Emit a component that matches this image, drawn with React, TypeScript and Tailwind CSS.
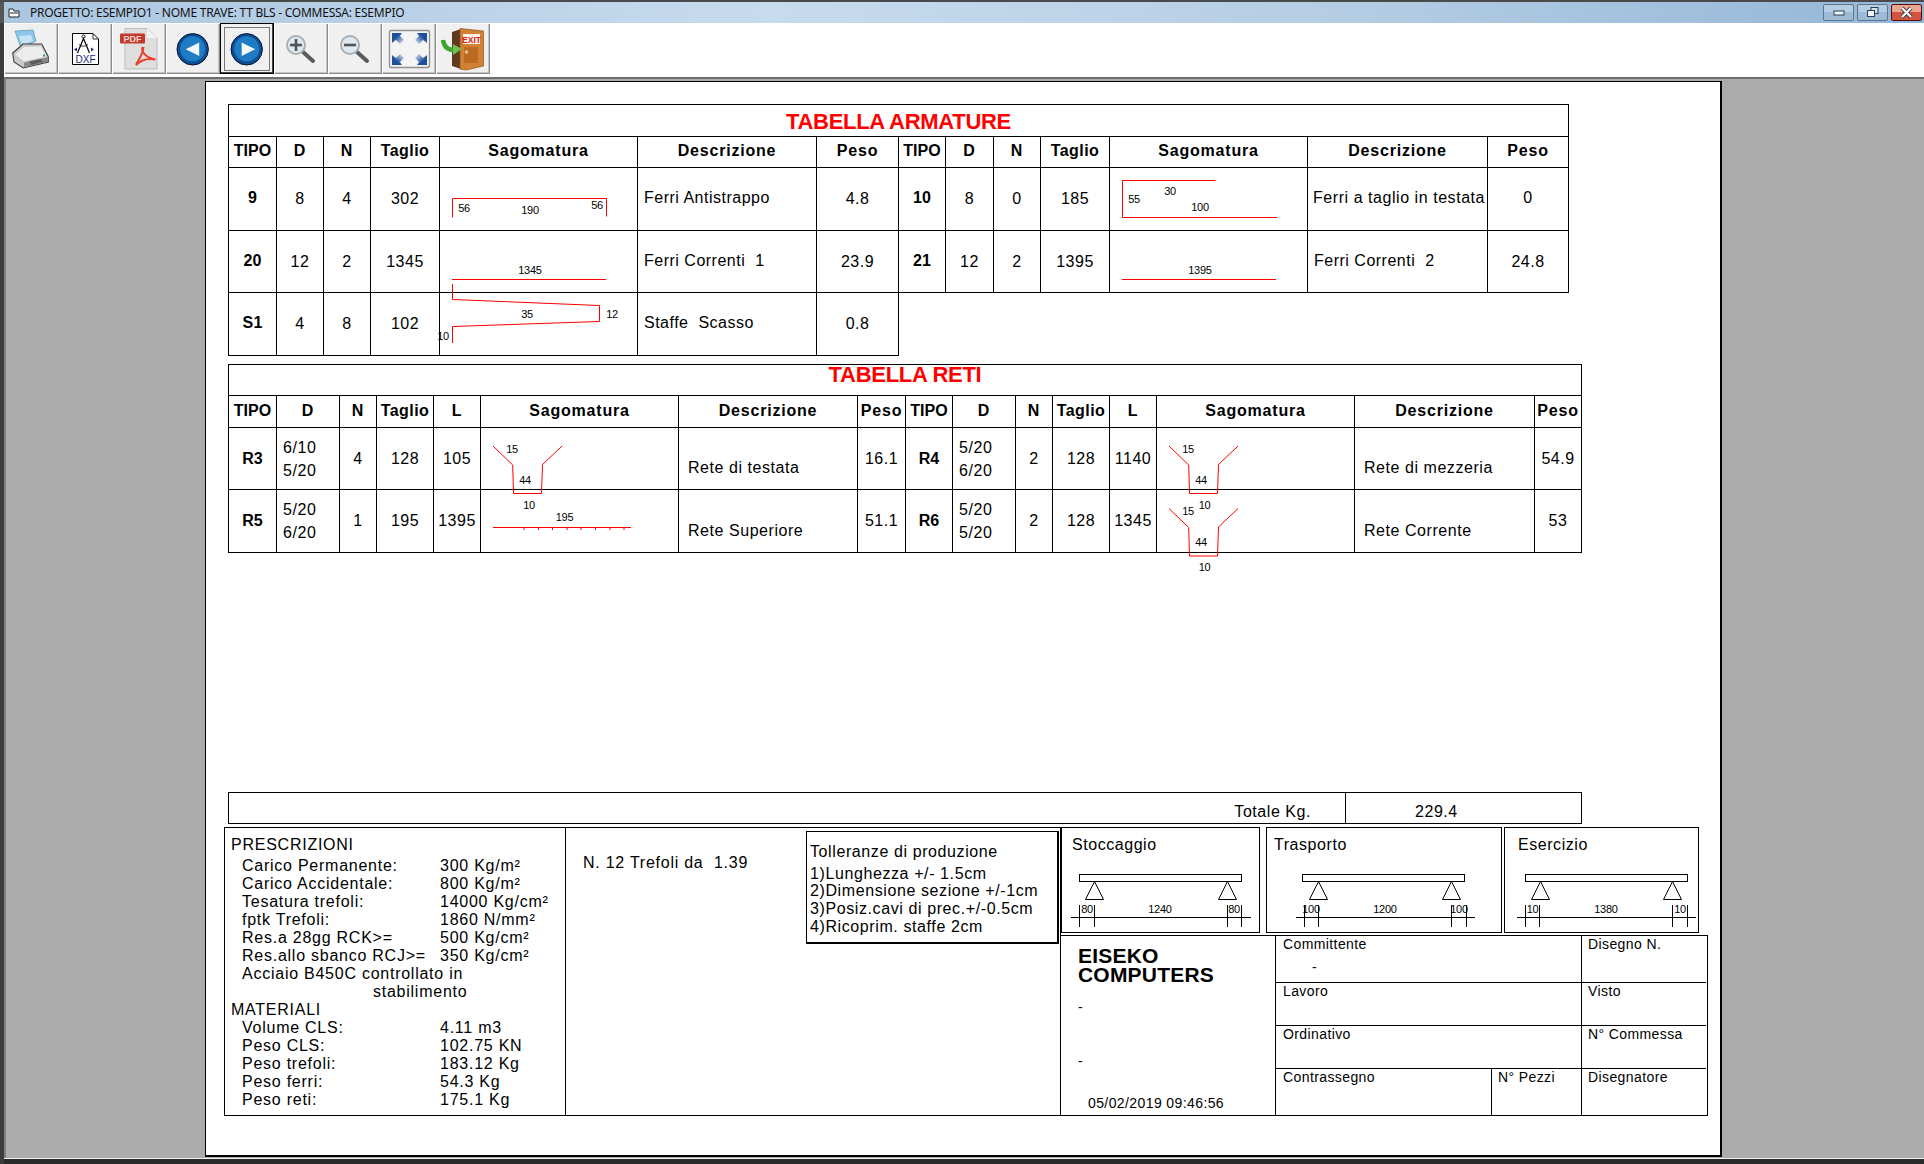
import React from "react";

const Base = "flex items-center justify-center border-r border-b border-black whitespace-pre";

function H({ c, first, narrow, mid }: { c: string; first?: boolean; narrow?: boolean; mid?: boolean }) {
  return (
    <div className={`${Base} ${first ? "border-l" : ""} ${narrow ? "tracking-[0px]" : mid ? "tracking-[0.45px]" : "tracking-[0.8px]"} font-bold text-[16px] pb-[2px]`}>{c}</div>
  );
}
function V({ c, first, bold, up }: { c: string; first?: boolean; bold?: boolean; up?: boolean }) {
  return (
    <div className={`${Base} ${first ? "border-l" : ""} text-[16px] ${bold ? "font-bold tracking-[0.1px]" : "tracking-[0.5px]"} ${up ? "pb-[2px]" : ""}`}>{c}</div>
  );
}
function Sk({ x, y, w, h, children }: { x: number; y: number; w: number; h: number; children?: React.ReactNode }) {
  return (
    <div className="flex items-start justify-start border-r border-b border-black">
      <svg width={w} height={h} viewBox={`${x} ${y} ${w} ${h}`} className="block overflow-visible" fill="none" stroke="#ff0000" strokeWidth="1">
        {children}
      </svg>
    </div>
  );
}
function T({ x, y, c }: { x: number; y: number; c: string }) {
  return (
    <text x={x} y={y + 4} textAnchor="middle" fontSize="11" letterSpacing="-0.25" fill="#000" stroke="none" fontFamily="Liberation Sans">{c}</text>
  );
}
function Desc({ c }: { c: string }) {
  return <div className={`${Base} justify-start! pl-[6px] pb-[2px] text-[16px] tracking-[0.5px]`}>{c}</div>;
}
function Desc2({ c, pt }: { c: string; pt?: boolean }) {
  return <div className={`${Base} justify-start! pl-[9px] ${pt ? "pt-[20px]" : "pt-[19px]"} text-[16px] tracking-[0.55px]`}>{c}</div>;
}
function DD({ a, b }: { a: string; b: string }) {
  return (
    <div className="flex flex-col justify-center pl-[6px] border-r border-b border-black text-[16px] tracking-[0.6px] leading-[23px]">
      <div>{a}</div>
      <div>{b}</div>
    </div>
  );
}

function Armature() {
  return (
    <div className="ml-[22px] mt-[22px] grid w-[1341px] grid-cols-[49px_47px_47px_69px_198px_179px_82px_47px_48px_47px_69px_198px_180px_81px] grid-rows-[33px_31px_63px_62px_63px]">
      <div className="col-span-14 flex items-center justify-center border border-black text-[22px] font-bold tracking-[-0.3px] text-[#ff0000] pt-[2px]">TABELLA ARMATURE</div>
      <H c="TIPO" first narrow /><H c="D" /><H c="N" /><H c="Taglio" mid /><H c="Sagomatura" /><H c="Descrizione" /><H c="Peso" />
      <H c="TIPO" narrow /><H c="D" /><H c="N" /><H c="Taglio" mid /><H c="Sagomatura" /><H c="Descrizione" /><H c="Peso" />

      <V c="9" first bold up /><V c="8" /><V c="4" /><V c="302" />
      <Sk x={440} y={168} w={197} h={62}>
        <polyline points="452.5,217.5 452.5,198.5 606.5,198.5 606.5,216.5" />
        <T x={464} y={208} c="56" /><T x={530} y={210} c="190" /><T x={597} y={205} c="56" />
      </Sk>
      <Desc c="Ferri Antistrappo" /><V c="4.8" />
      <V c="10" bold up /><V c="8" /><V c="0" /><V c="185" />
      <Sk x={1110} y={168} w={197} h={62}>
        <polyline points="1215.5,180.5 1122.5,180.5 1122.5,217.5 1277,217.5" />
        <T x={1134} y={199} c="55" /><T x={1170} y={191} c="30" /><T x={1200} y={207} c="100" />
      </Sk>
      <div className={`${Base} justify-start! pl-[5px] pb-[2px] text-[16px] tracking-[0.55px]`}>Ferri a taglio in testata</div><V c="0" up />

      <V c="20" first bold up /><V c="12" /><V c="2" /><V c="1345" />
      <Sk x={440} y={231} w={197} h={61}>
        <line x1="452" y1="279.5" x2="606" y2="279.5" />
        <T x={530} y={270} c="1345" />
      </Sk>
      <Desc c="Ferri Correnti  1" /><V c="23.9" />
      <V c="21" bold up /><V c="12" /><V c="2" /><V c="1395" />
      <Sk x={1110} y={231} w={197} h={61}>
        <line x1="1122" y1="279.5" x2="1276" y2="279.5" />
        <T x={1200} y={270} c="1395" />
      </Sk>
      <Desc c="Ferri Correnti  2" /><V c="24.8" />

      <V c="S1" first bold up /><V c="4" /><V c="8" /><V c="102" />
      <Sk x={440} y={293} w={197} h={62}>
        <polyline points="452.5,284 452.5,299.5 599.5,305.5 599.5,321.5 452.5,326.5 452.5,343" />
        <T x={527} y={314} c="35" /><T x={612} y={314} c="12" /><T x={443} y={336} c="10" />
      </Sk>
      <Desc c="Staffe  Scasso" /><V c="0.8" />
    </div>
  );
}

function Bars({ dx, dy }: { dx: number; dy: number }) {
  return (
    <polyline
      strokeWidth="1"
      points={`${493 + dx},${446 + dy} ${512.7 + dx},${465 + dy} ${513.5 + dx},${493.5 + dy} ${541.5 + dx},${493.5 + dy} ${542.5 + dx},${464.5 + dy} ${562 + dx},${446 + dy}`}
    />
  );
}

function Reti() {
  const ticks = [524, 538.5, 552.5, 567, 581, 595.5, 610, 624];
  return (
    <div className="ml-[22px] mt-[8px] grid w-[1354px] grid-cols-[49px_63px_37px_57px_47px_198px_179px_48px_47px_63px_37px_57px_47px_198px_180px_47px] grid-rows-[32px_32px_62px_63px]">
      <div className="col-span-16 flex items-center justify-center border border-black text-[22px] font-bold tracking-[-0.3px] text-[#ff0000] pb-[12px]">TABELLA RETI</div>
      <H c="TIPO" first narrow /><H c="D" /><H c="N" /><H c="Taglio" mid /><H c="L" /><H c="Sagomatura" /><H c="Descrizione" /><H c="Peso" />
      <H c="TIPO" narrow /><H c="D" /><H c="N" /><H c="Taglio" mid /><H c="L" /><H c="Sagomatura" /><H c="Descrizione" /><H c="Peso" />

      <V c="R3" first bold /><DD a="6/10" b="5/20" /><V c="4" /><V c="128" /><V c="105" />
      <Sk x={481} y={428} w={197} h={61}>
        <Bars dx={0} dy={0} />
        <T x={512} y={449} c="15" /><T x={525} y={480} c="44" />
      </Sk>
      <Desc2 c="Rete di testata" /><V c="16.1" />
      <V c="R4" bold /><DD a="5/20" b="6/20" /><V c="2" /><V c="128" /><V c="1140" />
      <Sk x={1157} y={428} w={197} h={61}>
        <Bars dx={676} dy={0} />
        <T x={1188} y={449} c="15" /><T x={1201} y={480} c="44" />
      </Sk>
      <Desc2 c="Rete di mezzeria" /><V c="54.9" />

      <V c="R5" first bold /><DD a="5/20" b="6/20" /><V c="1" /><V c="195" /><V c="1395" />
      <Sk x={481} y={490} w={197} h={62}>
        <line x1="493" y1="527.5" x2="631" y2="527.5" />
        {ticks.map((t) => (
          <line key={t} x1={t} y1="527.5" x2={t} y2="530" />
        ))}
        <T x={529} y={505} c="10" /><T x={564.5} y={517} c="195" />
      </Sk>
      <Desc2 c="Rete Superiore" pt /><V c="51.1" />
      <V c="R6" bold /><DD a="5/20" b="5/20" /><V c="2" /><V c="128" /><V c="1345" />
      <Sk x={1157} y={490} w={197} h={62}>
        <Bars dx={676} dy={62.5} />
        <T x={1188} y={511} c="15" /><T x={1204.5} y={505} c="10" /><T x={1201} y={542} c="44" /><T x={1204.5} y={567} c="10" />
      </Sk>
      <Desc2 c="Rete Corrente" pt /><V c="53" />
    </div>
  );
}

function Line({ a, b }: { a: string; b: string }) {
  return (
    <div className="flex h-[18px] items-center pl-[17px] whitespace-pre">
      <span className="w-[198px]">{a}</span>
      <span>{b}</span>
    </div>
  );
}

function Beam({ vx, vw, r1, r2, a1, a2, l1, l2, t, tx, lbl }: { vx: number; vw: number; r1: number; r2: number; a1: number; a2: number; l1: number; l2: number; t: number[]; tx: number[]; lbl: string[] }) {
  return (
    <svg width={vw} height="70" viewBox={`${vx} 861 ${vw} 70`} className="block" fill="none" stroke="#000" strokeWidth="1">
      <rect x={r1 + 0.5} y="874.5" width={r2 - r1} height="7" />
      {[a1, a2].map((a) => (
        <polygon key={a} points={`${a + 0.5},881.5 ${a - 8.5},899.5 ${a + 9.5},899.5`} />
      ))}
      <line x1={l1} y1="917.5" x2={l2} y2="917.5" />
      {t.map((x) => (
        <line key={x} x1={x + 0.5} y1="905" x2={x + 0.5} y2="927" />
      ))}
      {lbl.map((s, i) => (
        <text key={i} x={tx[i]} y="913" textAnchor="middle" fontSize="11" letterSpacing="-0.25" fill="#000" stroke="none" fontFamily="Liberation Sans">{s}</text>
      ))}
    </svg>
  );
}

function Bottom() {
  return (
    <div className="ml-[18px] mt-[3px] flex">
      <div className="flex h-[289px] w-[837px] border border-black text-[16px] tracking-[0.75px]">
        <div className="w-[341px] border-r border-black pt-[8px]">
          <div className="h-[18px] flex items-center pl-[6px]">PRESCRIZIONI</div>
          <div className="mt-[3px]">
            <Line a="Carico Permanente:" b="300 Kg/m²" />
            <Line a="Carico Accidentale:" b="800 Kg/m²" />
            <Line a="Tesatura trefoli:" b="14000 Kg/cm²" />
            <Line a="fptk Trefoli:" b="1860 N/mm²" />
            <Line a="Res.a 28gg RCK>=" b="500 Kg/cm²" />
            <Line a="Res.allo sbanco RCJ>=" b="350 Kg/cm²" />
            <div className="h-[18px] flex items-center pl-[17px]">Acciaio B450C controllato in</div>
            <div className="h-[18px] flex items-center pl-[148px]">stabilimento</div>
          </div>
          <div className="h-[18px] flex items-center pl-[6px]">MATERIALI</div>
          <Line a="Volume CLS:" b="4.11 m3" />
          <Line a="Peso CLS:" b="102.75 KN" />
          <Line a="Peso trefoli:" b="183.12 Kg" />
          <Line a="Peso ferri:" b="54.3 Kg" />
          <Line a="Peso reti:" b="175.1 Kg" />
        </div>
        <div className="flex flex-1 items-start justify-between pr-[1px]">
          <div className="ml-[17px] mt-[26px] h-[18px] flex items-center whitespace-pre">N. 12 Trefoli da  1.39</div>
          <div className="mt-[3px] h-[113px] w-[253px] border border-r-2 border-b-2 border-black pl-[3px] pt-[11px] tracking-[0.6px]">
            <div className="h-[18px] flex items-center">Tolleranze di produzione</div>
            <div className="mt-[4px]">
              <div className="h-[17px] flex items-center whitespace-pre">1)Lunghezza +/- 1.5cm</div>
              <div className="h-[18px] flex items-center">2)Dimensione sezione +/-1cm</div>
              <div className="h-[18px] flex items-center">3)Posiz.cavi di prec.+/-0.5cm</div>
              <div className="h-[17px] flex items-center">4)Ricoprim. staffe 2cm</div>
            </div>
          </div>
        </div>
      </div>

      <div className="flex flex-col">
        <div className="flex h-[106px] text-[16px] tracking-[0.55px]">
          <div className="w-[199px] border border-black">
            <div className="h-[33px] flex items-center pl-[10px]">Stoccaggio</div>
            <Beam vx={1062} vw={197} r1={1079} r2={1241} a1={1094} a2={1227} l1={1071} l2={1251} t={[1079, 1094, 1227, 1241]} tx={[1087, 1160, 1234]} lbl={["80", "1240", "80"]} />
          </div>
          <div className="ml-[6px] w-[236px] border border-black">
            <div className="h-[33px] flex items-center pl-[7px]">Trasporto</div>
            <Beam vx={1267} vw={234} r1={1302} r2={1464} a1={1318} a2={1451} l1={1296} l2={1475} t={[1304, 1318, 1451, 1466]} tx={[1311, 1385, 1459]} lbl={["100", "1200", "100"]} />
          </div>
          <div className="ml-[2px] w-[195px] border border-black">
            <div className="h-[33px] flex items-center pl-[13px]">Esercizio</div>
            <Beam vx={1505} vw={193} r1={1525} r2={1687} a1={1540} a2={1672} l1={1517} l2={1696} t={[1525, 1539, 1672, 1687]} tx={[1532.5, 1606, 1680]} lbl={["10", "1380", "10"]} />
          </div>
        </div>
        <div className="mt-[2px] flex h-[181px] w-[647px] border-t border-b border-r border-black text-[14px] leading-[16px] tracking-[0.4px]">
          <div className="w-[215px] border-r border-black pl-[17px] pt-[10px]">
            <div className="text-[21px] font-bold leading-[19px] tracking-[0.2px]">EISEKO</div>
            <div className="text-[21px] font-bold leading-[19px] tracking-[0.2px]">COMPUTERS</div>
            <div className="mt-[15px]">-</div>
            <div className="mt-[38px]">-</div>
            <div className="mt-[26px] pl-[10px] whitespace-pre">05/02/2019 09:46:56</div>
          </div>
          <div className="grid flex-1 grid-cols-[216px_90px_124px] grid-rows-[47px_43px_43px_46px]">
            <div className="col-span-2 border-r border-b border-black pl-[7px]">
              <div>Committente</div>
              <div className="mt-[7px] pl-[29px]">-</div>
            </div>
            <div className="border-b border-black pl-[6px]">Disegno N.</div>
            <div className="col-span-2 border-r border-b border-black pl-[7px]">Lavoro</div>
            <div className="border-b border-black pl-[6px]">Visto</div>
            <div className="col-span-2 border-r border-b border-black pl-[7px]">Ordinativo</div>
            <div className="border-b border-black pl-[6px]">N° Commessa</div>
            <div className="border-r border-black pl-[7px]">Contrassegno</div>
            <div className="border-r border-black pl-[6px]">N° Pezzi</div>
            <div className="pl-[6px]">Disegnatore</div>
          </div>
        </div>
      </div>
    </div>
  );
}

function Tool({ x, focus, children }: { x: number; focus?: boolean; children: React.ReactNode }) {
  return (
    <div className={`h-[51px] w-[54px] bg-[#f0f0f0] ${focus ? "shadow-[inset_0_0_0_1px_#000,inset_-1px_-1px_0_1px_#444]" : "shadow-[inset_1px_1px_0_#ffffff,inset_-1px_-1px_0_#8c8c8c,inset_-2px_-2px_0_#c4c4c4]"}`}>
      <svg width="54" height="51" viewBox={`${x} 23 54 51`} className="block">{children}</svg>
    </div>
  );
}

function Round({ cx, back }: { cx: number; back?: boolean }) {
  return (
    <>
      <circle cx={cx} cy="49.3" r="15.7" fill="#0d4f96" stroke="#06122a" strokeWidth="1" />
      <circle cx={cx} cy="48.8" r="12.5" fill="#1f7cc4" />
      <polygon points={back ? `${cx - 7},49.3 ${cx + 6.5},42.5 ${cx + 6.5},56` : `${cx - 5},42.5 ${cx - 5},56 ${cx + 8.5},49.3`} fill="#f4f8fb" />
    </>
  );
}

function Lens({ cx, minus }: { cx: number; minus?: boolean }) {
  return (
    <>
      <line x1={cx + 7} y1="52" x2={cx + 17} y2="61" stroke="#5a5a5a" strokeWidth="4" strokeLinecap="round" />
      <circle cx={cx} cy="45" r="9" fill="#dfe9ef" stroke="#a8b0b4" strokeWidth="2" />
      <rect x={cx - 6} y="43.7" width="12" height="2.6" fill="#555" />
      {!minus && <rect x={cx - 1.3} y="39" width="2.6" height="12" fill="#555" />}
    </>
  );
}

function Toolbar() {
  return (
    <div className="flex h-[54px] bg-white">
      <Tool x={4}>
        <polygon points="15,31 33,30 36,41 21,48" fill="#8cc6e8" stroke="#5f9cc0" strokeWidth="0.8" />
        <polygon points="19,36 31,35 33,41 22,45" fill="#c4e4f5" />
        <polygon points="12.7,53 23,44 41.7,44 48.3,56.7 48.3,62 23.3,68 14,62" fill="#c9c9c9" stroke="#3e3e3e" strokeWidth="1.1" />
        <polygon points="15,54.5 24,47 41,46.5 46.5,56.5 24,61.5" fill="#ececec" />
        <polygon points="24,62.5 48,57 48,61.5 24,67.5" fill="#8a8a8a" />
        <rect x="43" y="54.5" width="2" height="2" fill="#3aa048" />
        <polygon points="29,61.5 41,59 43,62 31,65" fill="#5f5f5f" />
      </Tool>
      <Tool x={58}>
        <polygon points="72.5,33.5 93,33.5 98.5,39 98.5,64.5 72.5,64.5" fill="#fff" stroke="#000" strokeWidth="1" />
        <polyline points="93,33.5 93,39 98.5,39" fill="none" stroke="#000" strokeWidth="0.8" />
        <circle cx="83.5" cy="36.5" r="1.6" fill="none" stroke="#000" strokeWidth="0.9" />
        <polyline points="77.5,53 83.5,38.5 89.5,53" fill="none" stroke="#000" strokeWidth="1.2" />
        <path d="M79 44.5 Q83.5 48 88 44.5" fill="none" stroke="#000" strokeWidth="0.8" />
        <polygon points="74,49.5 77,47.5 77,51.5" fill="#1a2a80" />
        <polygon points="94,49.5 91,47.5 91,51.5" fill="#1a2a80" />
        <text x="85.5" y="63" textAnchor="middle" fontSize="10" fill="#1a2a80" fontFamily="Liberation Sans">DXF</text>
      </Tool>
      <Tool x={112}>
        <polygon points="125,28.5 147,28.5 157,38 157,69 125,69" fill="#dedede" stroke="#bdbdbd" strokeWidth="1" />
        <polygon points="147,28.5 147,38 157,38" fill="#f2f2f2" />
        <rect x="120" y="33.5" width="25" height="10" rx="1" fill="#c33a2a" />
        <text x="132.5" y="42" textAnchor="middle" fontSize="9" fontWeight="bold" fill="#f4d6cf" fontFamily="Liberation Sans">PDF</text>
        <path d="M142.5 47 C141 52 146 58 155.5 59.5 C148 58 141 60 136 65 C139 59 143 54 143.5 47" fill="none" stroke="#e8402a" strokeWidth="2" />
      </Tool>
      <Tool x={166}>
        <Round cx={192.7} back />
      </Tool>
      <Tool x={220} focus>
        <rect x="224.5" y="27.5" width="45" height="43" fill="none" stroke="#000" strokeWidth="1" strokeDasharray="1 1" />
        <Round cx={246.7} />
      </Tool>
      <Tool x={274}>
        <Lens cx={296} />
      </Tool>
      <Tool x={328}>
        <Lens cx={350} minus />
      </Tool>
      <Tool x={382}>
        <defs>
          <linearGradient id="a1" x1="0" y1="0" x2="1" y2="1">
            <stop offset="0.35" stopColor="#1d4f9e" />
            <stop offset="1" stopColor="#1d4f9e" stopOpacity="0" />
          </linearGradient>
          <linearGradient id="a2" x1="1" y1="0" x2="0" y2="1">
            <stop offset="0.35" stopColor="#1d4f9e" />
            <stop offset="1" stopColor="#1d4f9e" stopOpacity="0" />
          </linearGradient>
          <linearGradient id="a3" x1="0" y1="1" x2="1" y2="0">
            <stop offset="0.35" stopColor="#1d4f9e" />
            <stop offset="1" stopColor="#1d4f9e" stopOpacity="0" />
          </linearGradient>
          <linearGradient id="a4" x1="1" y1="1" x2="0" y2="0">
            <stop offset="0.35" stopColor="#1d4f9e" />
            <stop offset="1" stopColor="#1d4f9e" stopOpacity="0" />
          </linearGradient>
        </defs>
        <rect x="389.5" y="30.5" width="40" height="37" rx="2" fill="#f4f4f4" stroke="#8f8f8f" strokeWidth="1.3" />
        <polygon points="392,33 402,33 400,36 404,40 400,44 396,40 392,43" fill="url(#a1)" />
        <polygon points="427,33 417,33 419,36 415,40 419,44 423,40 427,43" fill="url(#a2)" />
        <polygon points="392,65 402,65 400,62 404,58 400,54 396,58 392,55" fill="url(#a3)" />
        <polygon points="427,65 417,65 419,62 415,58 419,54 423,58 427,55" fill="url(#a4)" />
      </Tool>
      <Tool x={436}>
        <polygon points="452,32 461,29 461,69 452,66" fill="#5f3a1e" />
        <polygon points="460,28.5 483.5,31 483.5,66 466,70 460,69" fill="#d08232" stroke="#8e4f16" strokeWidth="0.7" />
        <rect x="463" y="34" width="17" height="10" fill="#fbf3ea" />
        <text x="471.5" y="42.5" textAnchor="middle" fontSize="8.5" fontWeight="bold" fill="#e01818" fontFamily="Liberation Sans">EXIT</text>
        <rect x="464" y="47" width="14" height="16" fill="#bb6a22" />
        <circle cx="466.5" cy="52" r="1.8" fill="#e8c28c" />
        <path d="M443 40 C444 47 448 50 454 50" fill="none" stroke="#3fa52e" strokeWidth="4.5" />
        <polygon points="453,44 462,49 453,55" fill="#6fc24f" />
      </Tool>
    </div>
  );
}

function WinBtn({ red, children }: { red?: boolean; children: React.ReactNode }) {
  return (
    <div className={`h-[17px] w-[31px] rounded-[2px] border ${red ? "border-[#5a0a0a] bg-[linear-gradient(#eda58f_0_45%,#d2543f_45%_100%)]" : "border-[#5e768e] bg-[linear-gradient(#b5cde3_0_45%,#9dbad6_45%_100%)]"}`}>
      <svg width="29" height="15" viewBox="0 0 29 15" className="block">{children}</svg>
    </div>
  );
}

export default function App() {
  return (
    <div className="h-[1164px] w-[1924px] overflow-hidden bg-[#2b2b2b] font-['Liberation_Sans',sans-serif] text-black">
      <div className="h-[2px] bg-[#4a4a4a]" />
      <div className="flex">
        <div className="h-[21px] w-[4px] bg-[#555555]" />
        <div className="flex h-[21px] flex-1 items-center bg-[linear-gradient(90deg,#aac6e0_0%,#c7dbee_40%,#b4cde4_70%,#94b6d6_100%)]">
          <svg width="14" height="12" viewBox="0 0 14 12" className="ml-[4px] block">
            <polygon points="1,2 5,2 6,4 11,4 11,10 1,10" fill="#fff" stroke="#222" strokeWidth="1" />
            <line x1="2" y1="6" x2="10" y2="6" stroke="#222" strokeWidth="1" />
          </svg>
          <span className="ml-[8px] font-['Noto_Sans',sans-serif] text-[12px] tracking-[-0.25px] text-[#111] whitespace-pre">PROGETTO: ESEMPIO1 - NOME TRAVE: TT BLS - COMMESSA: ESEMPIO</span>
          <div className="ml-auto mr-[2px] flex gap-[3px]">
            <WinBtn>
              <rect x="10" y="6" width="10" height="4" fill="#eef3f7" stroke="#2f3e4e" strokeWidth="1" />
            </WinBtn>
            <WinBtn>
              <rect x="13" y="2.5" width="7" height="6" fill="#cfdfee" stroke="#2f3e4e" strokeWidth="1" />
              <rect x="9.5" y="5.5" width="7" height="6" fill="#eef3f7" stroke="#2f3e4e" strokeWidth="1" />
            </WinBtn>
            <WinBtn red>
              <path d="M10 3 L19 12 M19 3 L10 12" stroke="#3a3a3a" strokeWidth="4" />
              <path d="M10 3 L19 12 M19 3 L10 12" stroke="#f4f4f4" strokeWidth="2.4" />
            </WinBtn>
          </div>
        </div>
      </div>
      <div className="flex">
        <div className="h-[1141px] w-[4px] bg-[#3c3c3c]" />
        <div className="flex-1">
          <Toolbar />
          <div className="h-[1081px] border-t-2 border-l-2 border-t-[#6e6e6e] border-l-[#808080] bg-[#ababab] pl-[199px] pt-[2px]">
            <div className="h-[1076px] w-[1517px] border-t border-l border-r-2 border-b-2 border-black bg-white">
              <Armature />
              <Reti />
              <div className="ml-[22px] mt-[239px] flex h-[32px] w-[1354px] border border-black text-[16px] tracking-[0.55px]">
                <div className="flex w-[1117px] items-center justify-end border-r border-black pr-[34px] pt-[8px]">Totale Kg.</div>
                <div className="flex items-center pl-[69px] pt-[8px]">229.4</div>
              </div>
              <Bottom />
            </div>
          </div>
          <div className="h-[1px] bg-[#f2f2f2]" />
        </div>
      </div>
    </div>
  );
}
